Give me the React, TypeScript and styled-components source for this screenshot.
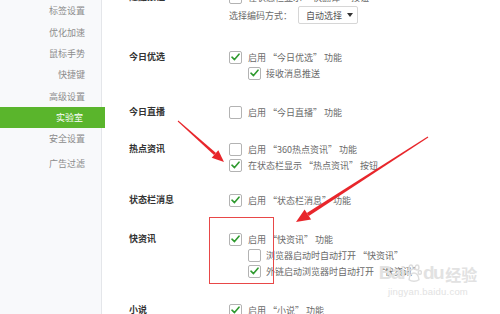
import React from "react";
import styled, { createGlobalStyle } from "styled-components";

const Global = createGlobalStyle`
  html, body { margin: 0; padding: 0; background: #fff; }
  body { font-family: "Noto Sans CJK SC", "Noto Sans", sans-serif; }
`;

const Page = styled.div`
  position: relative;
  width: 500px;
  height: 314px;
  overflow: hidden;
  display: flex;
  background: #fff;
  font-size: 9px;
`;

const Sidebar = styled.nav`
  width: 101px;
  flex: none;
  background: #f8f9fb;
  border-right: 1px solid #e4e6ea;
  display: flex;
  flex-direction: column;
  padding-top: 0.4px;
`;

const NavItem = styled.div<{ $active?: boolean; $extra?: number }>`
  height: 21.3px;
  line-height: 21.3px;
  margin-top: ${(p) => p.$extra ?? 0}px;
  padding-right: ${(p) => (p.$active ? 22 : 16)}px;
  text-align: right;
  color: ${(p) => (p.$active ? "#ffffff" : "#8c8c8c")};
  background: ${(p) => (p.$active ? "#5ab52c" : "transparent")};
  margin-right: ${(p) => (p.$active ? "-4px" : "0")};
  font-size: 9px;
  white-space: nowrap;
`;

const Main = styled.main`
  flex: 1;
  overflow: hidden;
  padding-left: 27px;
`;

const Scroller = styled.div`
  margin-top: -11px;
  display: flex;
  flex-direction: column;
`;

const Section = styled.section<{ $gap: number }>`
  display: flex;
  margin-top: ${(p) => p.$gap}px;
`;

const Label = styled.div`
  width: 100px;
  flex: none;
  line-height: 16px;
  color: #333;
  font-weight: 700;
  font-size: 9px;
  white-space: nowrap;
`;

const Options = styled.div`
  display: flex;
  flex-direction: column;
`;

const Row = styled.div<{ $indent?: boolean; $tall?: boolean }>`
  display: flex;
  align-items: center;
  height: ${(p) => (p.$tall ? 20 : 16)}px;
  padding-left: ${(p) => (p.$indent ? 19 : 0)}px;
  gap: ${(p) => (p.$indent ? 5 : 6)}px;
  color: #6a6a6a;
  font-size: 9px;
  white-space: nowrap;
`;

const Box = styled.span<{ $checked?: boolean }>`
  width: 11px;
  height: 11px;
  flex: none;
  border: 1px solid #b3b3b3;
  border-radius: 2px;
  background: #fff;
  display: flex;
  align-items: center;
  justify-content: center;
`;

const SelectBox = styled.div`
  margin-left: 0px;
  height: 16px;
  padding: 0 4px 0 7px;
  border: 1px solid #d6d6d6;
  border-radius: 2px;
  background: #fff;
  display: flex;
  align-items: center;
  gap: 5px;
  color: #555;
`;

const Caret = styled.span`
  width: 0;
  height: 0;
  border-left: 3px solid transparent;
  border-right: 3px solid transparent;
  border-top: 4px solid #333;
`;

const Overlay = styled.svg`
  position: absolute;
  left: 0;
  top: 0;
  pointer-events: none;
`;

const Highlight = styled.div`
  position: absolute;
  left: 209px;
  top: 217px;
  width: 63px;
  height: 65px;
  border: 1px solid #e84848;
  pointer-events: none;
`;

const Watermark = styled.div`
  position: absolute;
  left: 382px;
  top: 260px;
  width: 92px;
  display: flex;
  flex-direction: column;
  align-items: center;
  color: #e2e2e2;
  pointer-events: none;
  white-space: nowrap;
  font-family: "Liberation Sans", Arial, sans-serif;
`;

const MarkTop = styled.div`
  display: flex;
  align-items: flex-end;
  font-size: 19px;
  font-weight: bold;
  line-height: 26px;
  letter-spacing: -1.5px;
`;

const MarkCn = styled.span`
  font-family: "Noto Sans CJK SC", sans-serif;
  font-size: 16px;
  font-weight: 700;
  margin-left: 2px;
  letter-spacing: 0;
  line-height: 24px;
`;

const MarkUrl = styled.div`
  font-size: 9.5px;
  line-height: 12px;
  letter-spacing: 0.2px;
`;

const Tick = () => (
  <svg width="9" height="8" viewBox="0 0 9 8">
    <path d="M1 4.2 L3.5 6.6 L8 1.2" fill="none" stroke="#2f9a2f" strokeWidth="1.6" strokeLinecap="round" strokeLinejoin="round" />
  </svg>
);

const Check = ({ on, children, indent }: { on?: boolean; children: React.ReactNode; indent?: boolean }) => (
  <Row $indent={indent}>
    <Box $checked={on}>{on && <Tick />}</Box>
    <span>{children}</span>
  </Row>
);

const Paw = () => (
  <svg width="16" height="20" viewBox="0 0 26 30" style={{ margin: "0 1px 3px 2px" }}>
    <g fill="none" stroke="#dedede" strokeWidth="2.4">
      <ellipse cx="8" cy="6" rx="3" ry="4" />
      <ellipse cx="18" cy="6" rx="3" ry="4" />
      <ellipse cx="3.5" cy="14" rx="2.5" ry="3.2" />
      <ellipse cx="22.5" cy="14" rx="2.5" ry="3.2" />
      <path d="M5 26 C5 18 10 15 13 15 C16 15 21 18 21 26 C17 29 9 29 5 26 Z" />
    </g>
  </svg>
);

const navItems = ["标签设置", "优化加速", "鼠标手势", "快捷键", "高级设置", "实验室", "安全设置"];

export default function App() {
  return (
    <Page>
      <Global />
      <Sidebar>
        {navItems.map((t) => (
          <NavItem key={t} $active={t === "实验室"}>
            {t}
          </NavItem>
        ))}
        <NavItem $extra={4}>广告过滤</NavItem>
      </Sidebar>
      <Main>
        <Scroller>
          <Section $gap={0}>
            <Label>隐藏按钮</Label>
            <Options>
              <Check>在状态栏显示 “快翻译” 按钮</Check>
              <Row $tall>
                <span>选择编码方式：</span>
                <SelectBox>
                  <span>自动选择</span>
                  <Caret />
                </SelectBox>
              </Row>
            </Options>
          </Section>
          <Section $gap={24}>
            <Label>今日优选</Label>
            <Options>
              <Check on>启用 “今日优选” 功能</Check>
              <Check on indent>接收消息推送</Check>
            </Options>
          </Section>
          <Section $gap={23}>
            <Label>今日直播</Label>
            <Options>
              <Check>启用 “今日直播” 功能</Check>
            </Options>
          </Section>
          <Section $gap={21}>
            <Label>热点资讯</Label>
            <Options>
              <Check>启用 “360热点资讯” 功能</Check>
              <Check on>在状态栏显示 “热点资讯” 按钮</Check>
            </Options>
          </Section>
          <Section $gap={19}>
            <Label>状态栏消息</Label>
            <Options>
              <Check on>启用 “状态栏消息” 功能</Check>
            </Options>
          </Section>
          <Section $gap={23}>
            <Label>快资讯</Label>
            <Options>
              <Check on>启用 “快资讯” 功能</Check>
              <Check indent>浏览器启动时自动打开 “快资讯”</Check>
              <Check on indent>外链启动浏览器时自动打开 “快资讯”</Check>
            </Options>
          </Section>
          <Section $gap={23}>
            <Label>小说</Label>
            <Options>
              <Check on>启用 “小说” 功能</Check>
            </Options>
          </Section>
        </Scroller>
      </Main>
      <Highlight />
      <Watermark>
        <MarkTop>
          <span>Bai</span>
          <Paw />
          <span>du</span>
          <MarkCn>经验</MarkCn>
        </MarkTop>
        <MarkUrl>jingyan.baidu.com</MarkUrl>
      </Watermark>
      <Overlay width="500" height="314" viewBox="0 0 500 314">
        <g fill="#e8262b">
          <polygon points="177.7,121.4 178.3,120.6 216,152.9 214,155.1" />
          <polygon points="224,162 211.7,157.7 218.3,150.3" />
          <polygon points="427.7,136.6 428.3,137.4 308.8,215.9 306.8,212.9" />
          <polygon points="296,222 304.6,209.4 311.1,219.4" />
        </g>
      </Overlay>
    </Page>
  );
}
